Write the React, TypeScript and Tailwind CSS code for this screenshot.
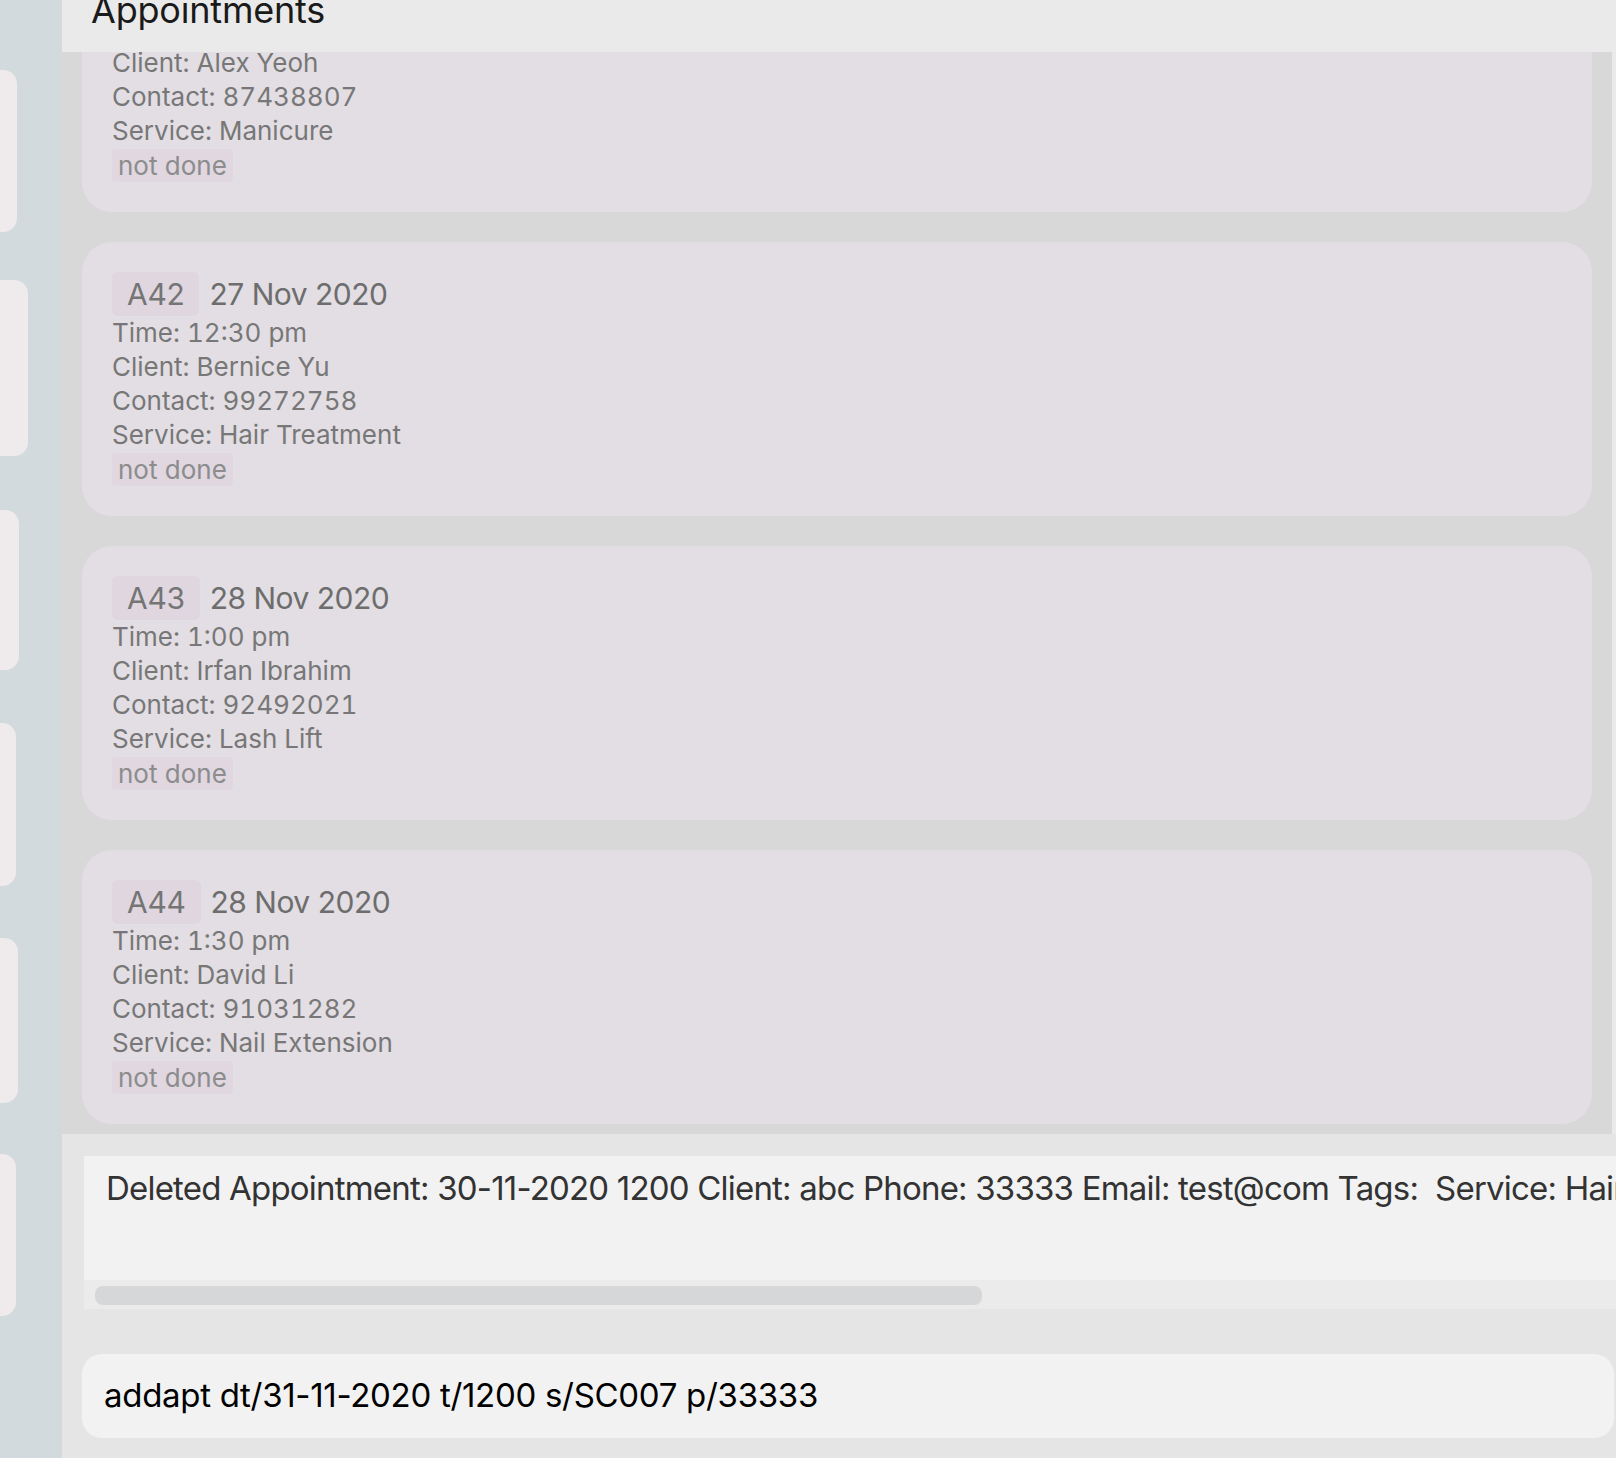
import React from "react";

type Appt = {
  id: string;
  date: string;
  time: string;
  client: string;
  contact: string;
  service: string;
};

const appts: Appt[] = [
  { id: "A41", date: "27 Nov 2020", time: "12:00 pm", client: "Alex Yeoh", contact: "87438807", service: "Manicure" },
  { id: "A42", date: "27 Nov 2020", time: "12:30 pm", client: "Bernice Yu", contact: "99272758", service: "Hair Treatment" },
  { id: "A43", date: "28 Nov 2020", time: "1:00 pm", client: "Irfan Ibrahim", contact: "92492021", service: "Lash Lift" },
  { id: "A44", date: "28 Nov 2020", time: "1:30 pm", client: "David Li", contact: "91031282", service: "Nail Extension" },
];

const font = { fontFamily: "Inter, 'Noto Sans', sans-serif" };

function Card({ a }: { a: Appt }) {
  return (
    <div className="rounded-[30px] bg-[#e2dee3] pl-[30px] pt-[30px] pb-[30px]">
      <div className="flex h-[44px] items-center">
        <span className="flex h-[44px] items-center rounded-[6px] bg-[#e0d6e0] px-[15px] text-[30px] tracking-[-0.3px] text-[#757575]">
          {a.id}
        </span>
        <span className="ml-[10px] text-[30px] tracking-[-0.5px] text-[#6d6d6d]">{a.date}</span>
      </div>
      <div className="text-[26px] leading-[34px] text-[#777777] tabular-nums">
        <div>Time: {a.time}</div>
        <div>Client: {a.client}</div>
        <div>Contact: {a.contact}</div>
        <div>Service: {a.service}</div>
      </div>
      <div className="mt-[1px] inline-block h-[33px] rounded-[4px] bg-[#e0d7e1] px-[6px] text-[26px] leading-[33px] text-[#8c8c8c]">
        not done
      </div>
    </div>
  );
}

const sideBoxes = [
  { top: 70, h: 162, w: 17 },
  { top: 48, h: 176, w: 28 },
  { top: 54, h: 160, w: 19 },
  { top: 53, h: 163, w: 16 },
  { top: 52, h: 165, w: 18 },
  { top: 51, h: 162, w: 16 },
];

export default function App() {
  return (
    <div className="flex h-[1458px] w-[1616px] overflow-hidden" style={font}>
      <aside className="flex w-[62px] shrink-0 flex-col bg-[#d3dadd]">
        {sideBoxes.map((b, i) => (
          <div
            key={i}
            className="rounded-r-[14px] bg-[#efebec]"
            style={{ marginTop: b.top, height: b.h, width: b.w }}
          />
        ))}
      </aside>
      <main className="flex min-w-0 flex-1 flex-col overflow-hidden bg-[#e5e5e5]">
        <header className="h-[52px] shrink-0 overflow-hidden bg-[#eaeaea] pl-[29px]">
          <div className="-mt-[8px] text-[36px] leading-[36px] tracking-[-0.2px] text-[#1a1a1a]">Appointments</div>
        </header>
        <div className="flex h-[1082px] shrink-0 bg-[#eaeaea]">
          <div className="flex-1 overflow-hidden bg-[#d8d8d8] px-[20px]">
            <div className="-mt-[114px] flex flex-col gap-[30px]">
              {appts.map((a) => (
                <Card key={a.id} a={a} />
              ))}
            </div>
          </div>
          <div className="w-[4px]" />
        </div>
        <div className="flex flex-1 flex-col pl-[22px] pt-[22px]">
          <div className="w-[1560px] shrink-0 bg-[#f2f2f2]">
            <div className="h-[124px] whitespace-nowrap pl-[22px] pt-[12px] text-[33px] leading-[40px] tracking-[-0.8px] text-[#333333]">
              Deleted Appointment: 30-11-2020 1200 Client: abc Phone: 33333 Email: test@com Tags:{"\u00a0\u00a0"}Service: Hair Treatment
            </div>
            <div className="h-[29px] bg-[#ebebeb] pl-[11px] pt-[6px]">
              <div className="h-[19px] w-[887px] rounded-[8px] bg-[#d6d7d9]" />
            </div>
          </div>
          <div className="-ml-[2px] mr-[2px] mt-[45px] flex h-[84px] items-center whitespace-nowrap rounded-[20px] bg-[#f2f2f2] pl-[22px] text-[33px] tracking-[-0.3px] text-black">
            addapt dt/31-11-2020 t/1200 s/SC007 p/33333
          </div>
        </div>
      </main>
    </div>
  );
}
